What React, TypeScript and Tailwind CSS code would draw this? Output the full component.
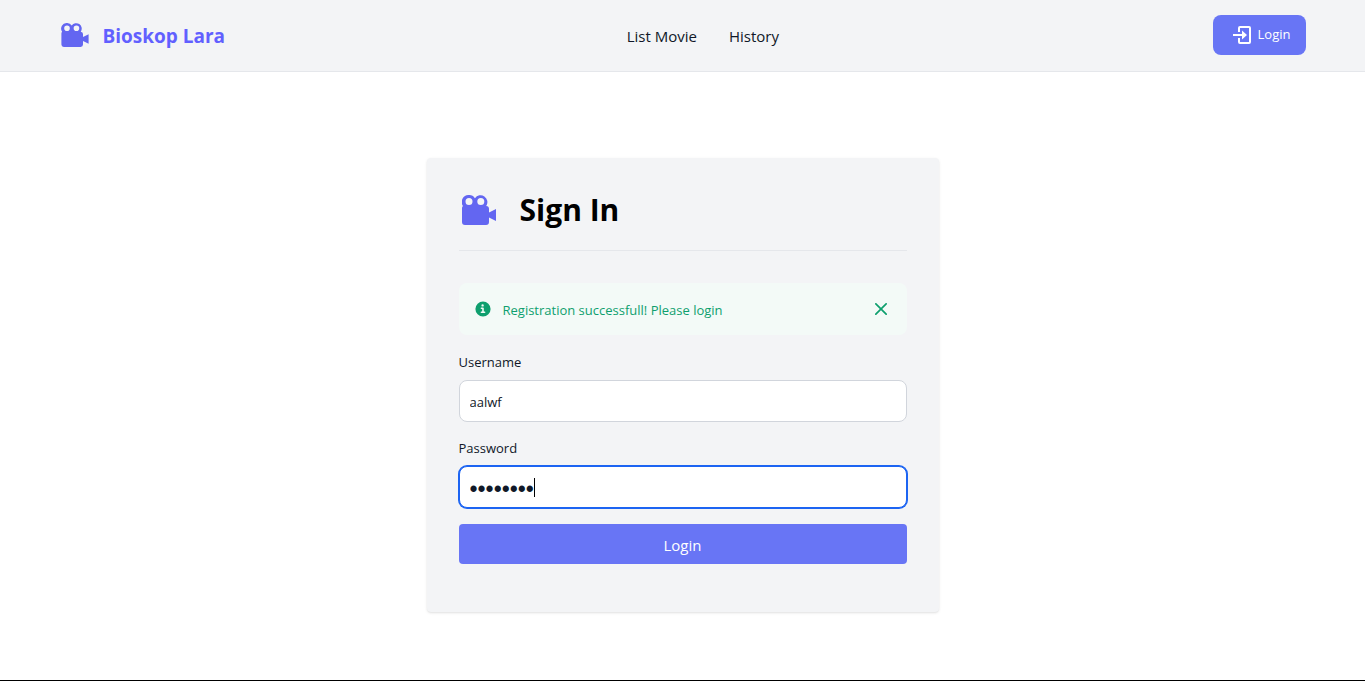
import { useState } from 'react';

const BULLET_WIDTH = 8;
const FIELD_INSET = 11;

function CameraIcon({ className }: { className: string }) {
  return (
    <svg viewBox="0 0 34 30" className={className} fill="#6366f1" aria-hidden="true">
      <path
        fillRule="evenodd"
        d="M7 0a6.8 6.8 0 0 1 5.900 3.2A6.8 6.8 0 1 1 24.200 10.900 3 3 0 0 1 27 14V17.500l7-3.500v12l-7-3.500V27a3 3 0 0 1-3 3H3a3 3 0 0 1-3-3V13a3 3 0 0 1 .9-2.100A7 7 0 0 1 7 0Zm0 3.100a3.500 3.500 0 1 0 0 7a3.500 3.500 0 1 0 0-7Zm11.800 0a3.500 3.500 0 1 0 0 7a3.500 3.500 0 1 0 0-7Z"
      />
    </svg>
  );
}

function EnterIcon() {
  return (
    <svg viewBox="0 0 18 18" className="size-[18px]" aria-hidden="true">
      <path d="M6 6V2a1 1 0 0 1 1-1h9a1 1 0 0 1 1 1v14a1 1 0 0 1-1 1H7a1 1 0 0 1-1-1v-4" fill="none" stroke="#fff" strokeWidth="2" />
      <path d="M0 8h9V4.500l5 4.500l-5 4.500V10H0Z" fill="#fff" />
    </svg>
  );
}

export default function App() {
  const [username, setUsername] = useState('aalwf');
  const [password, setPassword] = useState('password');
  const [showAlert, setShowAlert] = useState(true);

  return (
    <div className="flex min-h-screen flex-col border-b border-black bg-white font-['Open_Sans',sans-serif] text-gray-900">
      <header className="border-b border-gray-200 bg-gray-100">
        <div className="mx-auto flex max-w-screen-xl items-center justify-between px-4 pt-[15px] pb-4">
          <a href="#" className="flex items-center gap-[14px] pl-[2px]">
            <CameraIcon className="h-6 w-7" />
            <span className="pt-[2px] text-[19px] leading-7 font-bold text-indigo-500">Bioskop Lara</span>
          </a>
          <nav className="flex gap-8 pt-[2px] pr-8 text-[15px] leading-6">
            <a href="#list">List Movie</a>
            <a href="#history">History</a>
          </nav>
          <button type="button" className="flex h-10 items-center gap-[7px] rounded-lg bg-[#6875f5] pr-4 pl-5 text-[13px] text-white">
            <EnterIcon />
            Login
          </button>
        </div>
      </header>

      <main className="flex grow items-center justify-center pt-[18px]">
        <section className="w-full max-w-lg rounded-sm bg-gray-100 px-8 pt-8 pb-12 shadow-sm">
          <div className="flex items-center gap-6 border-b border-gray-200 pb-5 pl-[3px]">
            <CameraIcon className="h-[30px] w-[34px]" />
            <h1 className="text-[30px] leading-10 font-bold text-black">Sign In</h1>
          </div>

          {showAlert && (
            <div role="alert" className="mt-8 flex h-[52px] items-center rounded-lg bg-[#f3faf7] px-4 text-[#0e9f6e]">
              <svg viewBox="0 0 20 20" className="size-4 shrink-0" fill="currentColor" aria-hidden="true">
                <path d="M10 .5a9.500 9.500 0 1 0 9.500 9.500A9.500 9.500 0 0 0 10 .5ZM9.500 4a1.500 1.500 0 1 1 0 3 1.500 1.500 0 0 1 0-3ZM12 15H8a1 1 0 0 1 0-2h1v-3H8a1 1 0 0 1 0-2h2a1 1 0 0 1 1 1v4h1a1 1 0 0 1 0 2Z" />
              </svg>
              <span className="ml-3 pt-[2px] text-[13px] leading-5">Registration successfull! Please login</span>
              <button type="button" aria-label="Close" onClick={() => setShowAlert(false)} className="ml-auto p-1">
                <svg viewBox="0 0 14 14" className="size-3" fill="none" stroke="currentColor" strokeWidth="2" strokeLinecap="round" aria-hidden="true">
                  <path d="m1 1 12 12M13 1 1 13" />
                </svg>
              </button>
            </div>
          )}

          <form onSubmit={(event) => event.preventDefault()} className="mt-4">
            <label htmlFor="username" className="mb-2 block pt-px text-[13px] leading-5">Username</label>
            <input
              id="username"
              type="text"
              value={username}
              onChange={(event) => setUsername(event.target.value)}
              className="mb-[15px] block h-[42px] w-full rounded-lg border border-gray-300 bg-white px-[10px] pt-[2px] text-[13px] outline-none focus:border-[#1c64f2] focus:ring-1 focus:ring-[#1c64f2]"
            />
            <label htmlFor="password" className="mb-2 block pt-px text-[13px] leading-5">Password</label>
            <div className="relative mb-4">
              <input
                id="password"
                type="password"
                autoFocus
                value={password}
                onChange={(event) => setPassword(event.target.value)}
                className="peer block h-[42px] w-full rounded-lg border border-gray-300 bg-white px-[10px] pt-1 font-['Liberation_Sans',sans-serif] text-[23px] caret-transparent outline-none focus:border-[#1c64f2] focus:ring-1 focus:ring-[#1c64f2]"
              />
              <span
                aria-hidden="true"
                className="pointer-events-none absolute top-3 hidden h-[19px] w-px bg-black peer-focus:block"
                style={{ left: FIELD_INSET + password.length * BULLET_WIDTH }}
              />
            </div>
            <button type="submit" className="h-10 w-full rounded-sm bg-[#6875f5] pt-[2px] text-[15px] text-white">Login</button>
          </form>
        </section>
      </main>
    </div>
  );
}
